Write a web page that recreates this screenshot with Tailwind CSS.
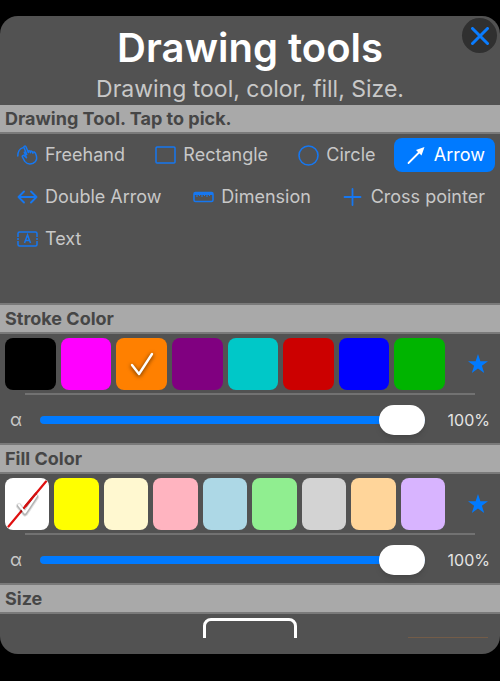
<!DOCTYPE html>
<html lang="en">
<head>
    <meta charset="UTF-8">
    <meta name="viewport" content="width=device-width, initial-scale=1.0">
    <script src="https://cdn.jsdelivr.net/npm/@tailwindcss/browser@4"></script>
    <title>Drawing tools</title>
</head>
<body class="bg-black min-h-screen pt-4 font-['Inter','Liberation_Sans',sans-serif] text-[#c8c8c8]">
    <main class="relative bg-[#525252] rounded-[18px] overflow-hidden pb-4">
        <header class="text-center pt-2 h-[89px]">
            <h1 class="text-[40px] leading-[48px] font-semibold text-white">Drawing tools</h1>
            <p class="text-[23px] leading-[34px]">Drawing tool, color, fill, Size.</p>
            <button id="close" aria-label="Close" class="absolute top-[2px] right-[3px] size-[35px] rounded-full bg-[#303030] flex items-center justify-center">
                <svg class="size-[18px]" viewBox="0 0 18 18" fill="none" stroke="#0a7cff" stroke-width="3" stroke-linecap="round"><path d="M1.500 1.500l15 15M16.500 1.500l-15 15"/></svg>
            </button>
        </header>

        <h2 class="bg-[#a9a9a9] border-b-2 border-[#7a7a7a] h-[29px] px-[5px] text-lg leading-[28px] font-bold text-[#464646]">Drawing Tool. Tap to pick.</h2>
        <section id="tools" class="h-[169px] px-[5px] pt-1 flex flex-col gap-2 text-lg">
            <div class="flex justify-between">
                <button class="tool h-[34px] pl-3 pr-[10px] flex items-center gap-[7px] rounded-lg">
                    <svg class="w-[21px] h-5" viewBox="0 0 21 20" fill="none" stroke="#1677f0" stroke-width="1.500" stroke-linecap="round" stroke-linejoin="round"><path d="M.8 11C.8 6.500 3 3.500 6 2.600"/><path d="M9.800 9.500L7 2.600c-.5-1.500 1.500-2.200 2-.8l2.300 5.700M11.500 7.500l-.3-1.200c.6-1 1.500-.7 1.900.2l.5 1.200M13.400 6.700c.7-1 1.600-.6 2 .3l.5 1.200M15.800 7.300c1-.8 2-.3 2.800 1.200 1.900 4.500 1.200 8.300-2.500 9.800-3.700 1.300-6.500.4-8.300-1.900l-2.300-4.200c-.8-1.600 1-2.400 2-1.200l2 1.800-2.200-5.600"/></svg>
                    Freehand
                </button>
                <button class="tool h-[34px] pl-3 pr-[10px] flex items-center gap-[7px] rounded-lg">
                    <svg class="w-[21px] h-5" viewBox="0 0 21 20" fill="none" stroke="#1677f0" stroke-width="1.500"><rect x="1" y="2" width="19" height="16" rx="1"/></svg>
                    Rectangle
                </button>
                <button class="tool h-[34px] pl-3 pr-[10px] flex items-center gap-[7px] rounded-lg">
                    <svg class="size-[21px]" viewBox="0 0 21 21" fill="none" stroke="#1677f0" stroke-width="1.600"><circle cx="10.500" cy="10.500" r="9.500"/></svg>
                    Circle
                </button>
                <button aria-pressed="true" class="tool h-[34px] pl-3 pr-[10px] flex items-center gap-[7px] rounded-lg bg-[#007aff] text-white">
                    <svg class="w-[21px] h-5" viewBox="0 0 21 20" fill="none" stroke="white" stroke-width="1.800" stroke-linecap="round"><path d="M2.500 18L14 6.500"/><path d="M18.500 2l-8.500 3 5.500 5.500z" fill="white" stroke="none"/></svg>
                    Arrow
                </button>
            </div>
            <div class="flex justify-between">
                <button class="tool h-[34px] pl-3 pr-[10px] flex items-center gap-[7px] rounded-lg">
                    <svg class="w-[21px] h-5" viewBox="0 0 21 20" fill="none" stroke="#1677f0" stroke-width="1.900" stroke-linecap="round" stroke-linejoin="round"><path d="M1.500 10h18M7 4.500L1.500 10 7 15.500M14 4.500l5.500 5.500-5.500 5.500"/></svg>
                    Double Arrow
                </button>
                <button class="tool h-[34px] pl-3 pr-[10px] flex items-center gap-[7px] rounded-lg">
                    <svg class="w-[21px] h-5" viewBox="0 0 21 20" fill="none" stroke="#1677f0" stroke-width="1.600"><rect x="1" y="5.500" width="19" height="9" rx="1.500"/><path d="M1 7h19" stroke-width="2"/><path d="M4 7v3M6.500 7v2M9 7v3M11.500 7v2M14 7v3M16.500 7v2" stroke-width="1"/></svg>
                    Dimension
                </button>
                <button class="tool h-[34px] pl-3 pr-[10px] flex items-center gap-[7px] rounded-lg">
                    <svg class="w-[21px] h-5" viewBox="0 0 21 20" fill="none" stroke="#1677f0" stroke-width="1.800" stroke-linecap="round"><path d="M1.500 10h16M9.500 2v16"/></svg>
                    Cross pointer
                </button>
            </div>
            <div class="flex justify-between">
                <button class="tool h-[34px] pl-3 pr-[10px] flex items-center gap-[7px] rounded-lg">
                    <svg class="w-[21px] h-5" viewBox="0 0 21 20" fill="none" stroke="#1677f0" stroke-width="1.500"><path d="M9 3H2.500Q1 3 1 4.500V8M12 3h6.500Q20 3 20 4.500V8M1 12v3.500Q1 17 2.500 17H9M20 12v3.500q0 1.500-1.500 1.500H12M9 3h3M9 17h3M0 10h2M19 10h2"/><path d="M7.500 14l3-8 3 8M8.500 11.500h4"/></svg>
                    Text
                </button>
            </div>
        </section>

        <h2 class="bg-[#a9a9a9] border-y-2 border-[#7a7a7a] h-[31px] px-[5px] text-lg leading-[28px] font-bold text-[#464646]">Stroke Color</h2>
        <section class="h-[109px] pt-1">
            <div class="flex items-center h-[52px] pl-[5px]">
                <div class="flex-1 flex gap-[5px] h-full">
                    <button aria-label="Black" class="flex-1 rounded-lg bg-black"></button>
                    <button aria-label="Magenta" class="flex-1 rounded-lg bg-[#ff00ff]"></button>
                    <button aria-label="Orange" aria-pressed="true" class="flex-1 rounded-lg bg-[#ff8000] flex items-center justify-center">
                        <svg class="w-6 h-6 drop-shadow-[0_1px_2px_rgba(0,0,0,0.7)]" viewBox="0 0 24 24" fill="none" stroke="white" stroke-width="2.400" stroke-linecap="round" stroke-linejoin="round"><path d="M2 13l7 9L22 2"/></svg>
                    </button>
                    <button aria-label="Purple" class="flex-1 rounded-lg bg-[#800080]"></button>
                    <button aria-label="Teal" class="flex-1 rounded-lg bg-[#00c8c8]"></button>
                    <button aria-label="Red" class="flex-1 rounded-lg bg-[#cc0000]"></button>
                    <button aria-label="Blue" class="flex-1 rounded-lg bg-[#0000ff]"></button>
                    <button aria-label="Green" class="flex-1 rounded-lg bg-[#00b400]"></button>
                </div>
                <button aria-label="Favorite stroke colors" class="w-[55px] pl-[10px] flex justify-center">
                    <svg class="size-5" viewBox="0 0 20 20" fill="#007aff"><path d="M10 0l2.400 7.200H20l-6.100 4.500 2.300 7.300L10 14.600 3.800 19l2.300-7.300L0 7.200h7.600z"/></svg>
                </button>
            </div>
            <hr class="mx-[25px] mt-[3px] border-t-2 border-[#727272]">
            <div class="flex items-center h-[50px] px-[10px]">
                <label for="strokeAlpha" class="w-[30px] text-lg">α</label>
                <input id="strokeAlpha" type="range" min="0" max="100" value="100" class="flex-1 min-w-0 h-2 appearance-none rounded-full bg-[#007aff] [&::-webkit-slider-thumb]:appearance-none [&::-webkit-slider-thumb]:w-[46px] [&::-webkit-slider-thumb]:h-[30px] [&::-webkit-slider-thumb]:rounded-full [&::-webkit-slider-thumb]:bg-white [&::-webkit-slider-thumb]:shadow-md">
                <output for="strokeAlpha" class="w-[65px] text-right text-base text-[#e4e4e4]">100%</output>
            </div>
        </section>

        <h2 class="bg-[#a9a9a9] border-y-2 border-[#7a7a7a] h-[31px] px-[5px] text-lg leading-[28px] font-bold text-[#464646]">Fill Color</h2>
        <section class="h-[109px] pt-1">
            <div class="flex items-center h-[52px] pl-[5px]">
                <div class="flex-1 flex gap-[5px] h-full">
                    <button aria-label="No fill" aria-pressed="true" class="flex-1 rounded-lg bg-white flex items-center justify-center">
                        <svg class="w-11 h-[52px]" viewBox="0 0 44 52" fill="none" stroke-linecap="round" stroke-linejoin="round">
                            <path d="M3.500 48.500L41 3.500" stroke="#e01010" stroke-width="2.200"/>
                            <path d="M14 28l6 7.500L31 19" stroke="black" stroke-opacity=".12" stroke-width="6"/>
                            <path d="M14 28l6 7.500L31 19" stroke="black" stroke-opacity=".2" stroke-width="4"/>
                            <path d="M14 27l6 7.500L31 18" stroke="white" stroke-width="2.200"/>
                            <path d="M20.500 28L31 15.500" stroke="#d01010" stroke-width="2.200"/>
                        </svg>
                    </button>
                    <button aria-label="Yellow" class="flex-1 rounded-lg bg-[#ffff00]"></button>
                    <button aria-label="Cream" class="flex-1 rounded-lg bg-[#fff8d0]"></button>
                    <button aria-label="Pink" class="flex-1 rounded-lg bg-[#ffb4c0]"></button>
                    <button aria-label="Light blue" class="flex-1 rounded-lg bg-[#add8e6]"></button>
                    <button aria-label="Light green" class="flex-1 rounded-lg bg-[#90ee90]"></button>
                    <button aria-label="Light gray" class="flex-1 rounded-lg bg-[#d3d3d3]"></button>
                    <button aria-label="Peach" class="flex-1 rounded-lg bg-[#ffd59a]"></button>
                    <button aria-label="Lavender" class="flex-1 rounded-lg bg-[#d8b4ff]"></button>
                </div>
                <button aria-label="Favorite fill colors" class="w-[55px] pl-[10px] flex justify-center">
                    <svg class="size-5" viewBox="0 0 20 20" fill="#007aff"><path d="M10 0l2.400 7.200H20l-6.100 4.500 2.300 7.300L10 14.600 3.800 19l2.300-7.300L0 7.200h7.600z"/></svg>
                </button>
            </div>
            <hr class="mx-[25px] mt-[3px] border-t-2 border-[#727272]">
            <div class="flex items-center h-[50px] px-[10px]">
                <label for="fillAlpha" class="w-[30px] text-lg">α</label>
                <input id="fillAlpha" type="range" min="0" max="100" value="100" class="flex-1 min-w-0 h-2 appearance-none rounded-full bg-[#007aff] [&::-webkit-slider-thumb]:appearance-none [&::-webkit-slider-thumb]:w-[46px] [&::-webkit-slider-thumb]:h-[30px] [&::-webkit-slider-thumb]:rounded-full [&::-webkit-slider-thumb]:bg-white [&::-webkit-slider-thumb]:shadow-md">
                <output for="fillAlpha" class="w-[65px] text-right text-base text-[#e4e4e4]">100%</output>
            </div>
        </section>

        <h2 class="bg-[#a9a9a9] border-y-2 border-[#7a7a7a] h-[31px] px-[5px] text-lg leading-[28px] font-bold text-[#464646]">Size</h2>
        <!-- first row of size presets, the rest is scrolled out -->
        <section class="h-6 pt-1 px-[5px] grid grid-cols-[1fr_94px_1fr] overflow-hidden">
            <span></span>
            <button aria-label="Size preset" class="h-12 rounded-lg border-[3px] border-white"></button>
            <span class="h-5 w-20 ml-auto mr-[7px] border-b border-[#735c48]"></span>
        </section>
    </main>
</body>
</html>
